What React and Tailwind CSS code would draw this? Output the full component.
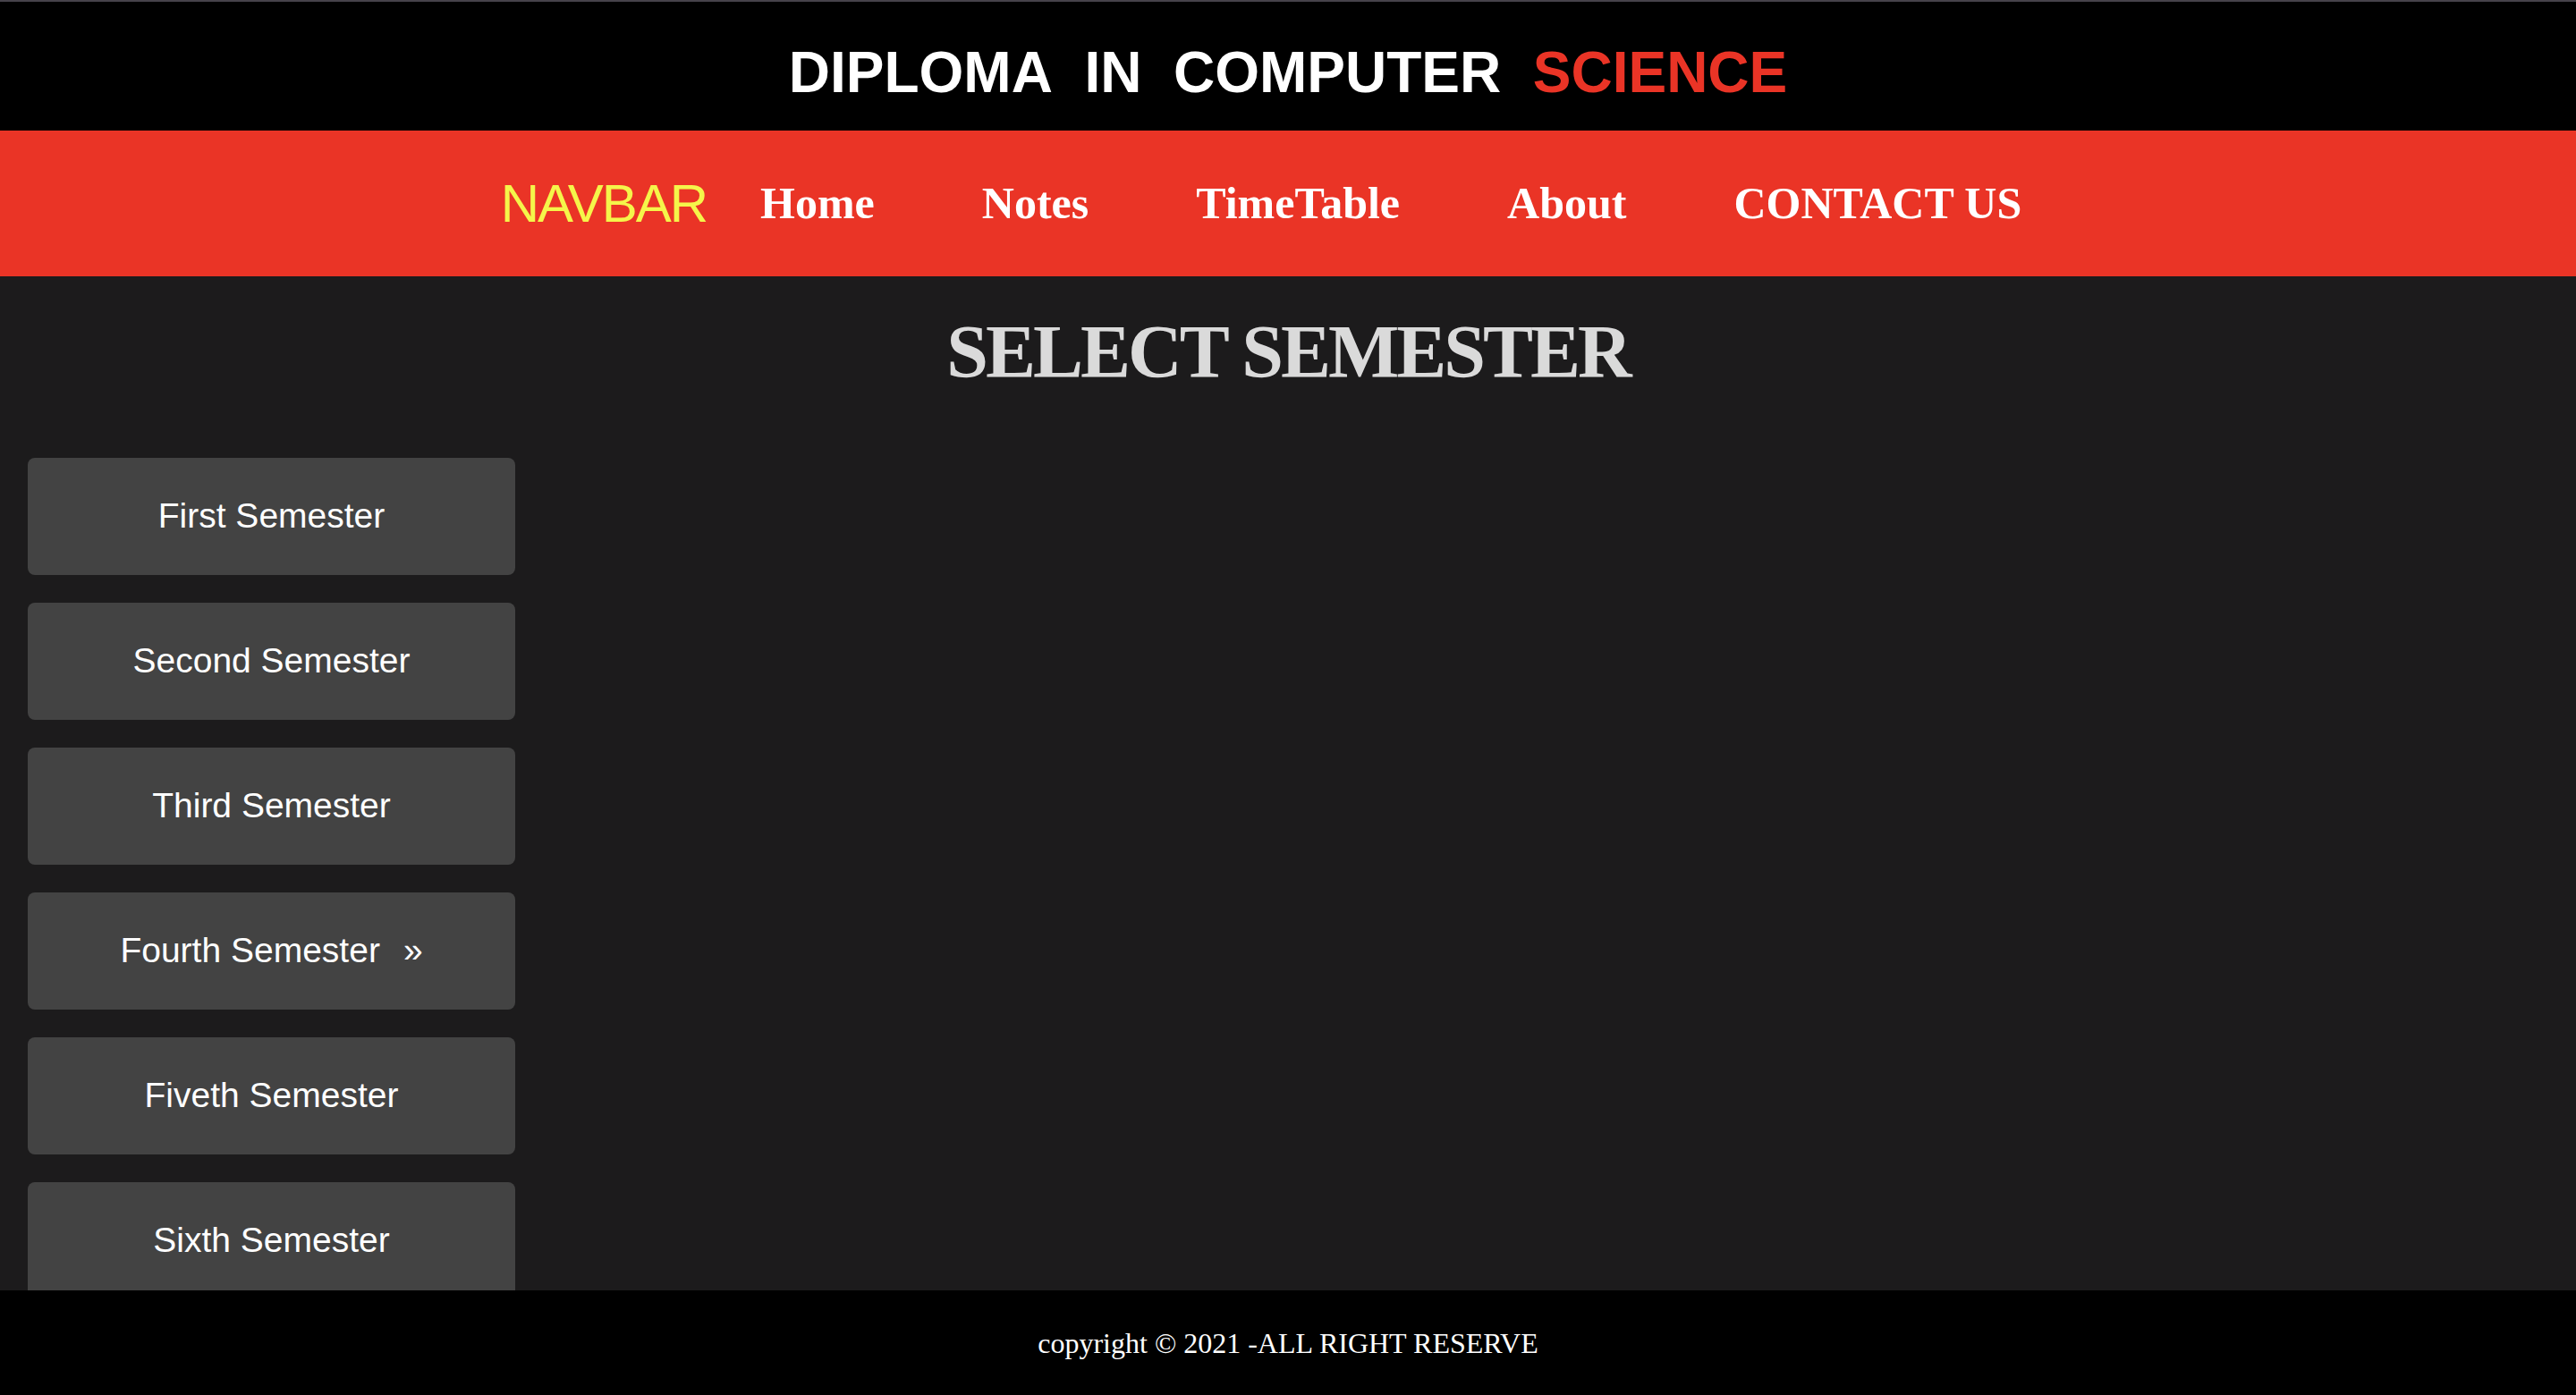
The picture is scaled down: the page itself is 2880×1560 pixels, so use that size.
const links = ['Home', 'Notes', 'TimeTable', 'About', 'CONTACT US']

const semesters = [
  'First Semester',
  'Second Semester',
  'Third Semester',
  'Fourth Semester',
  'Fiveth Semester',
  'Sixth Semester',
]

export default function App() {
  return (
    <div className="min-h-screen bg-[#1c1b1c] pb-[140px]">
      {/* Title bar */}
      <header className="h-[146px] overflow-hidden border-t-2 border-[#46424a] bg-black pt-[31px]">
        <h1 className="text-center font-['Liberation_Sans',Arial,sans-serif] text-[64px] font-bold leading-normal text-white">
          DIPLOMA{'\u00a0 '}IN{'\u00a0 '}COMPUTER{'\u00a0 '}
          <span className="text-[#ea3426]">SCIENCE</span>
        </h1>
      </header>

      {/* Navbar */}
      <nav className="flex h-[163px] items-center justify-center bg-[#ea3426]">
        <span className="font-['Liberation_Sans',Arial,sans-serif] text-[60px] leading-normal tracking-[-2px] text-[#f5f54a]">
          NAVBAR
        </span>
        <ul className="flex items-center">
          {links.map((link) => (
            <li
              key={link}
              className="px-[60px] font-['Liberation_Serif','Times_New_Roman',serif] text-[50px] font-bold leading-normal text-white"
            >
              {link}
            </li>
          ))}
        </ul>
      </nav>

      <h2 className="mt-[22px] text-center font-['Liberation_Serif','Times_New_Roman',serif] text-[84px] font-bold leading-normal tracking-[-3px] text-[#dadada]">
        SELECT SEMESTER
      </h2>

      {/* Semester list */}
      <div className="mt-[55px] flex w-[576px] flex-col gap-[31px] pl-[31px]">
        {semesters.map((sem) => (
          <button
            key={sem}
            className="flex h-[131px] items-center justify-center rounded-[8px] bg-[#434343] font-['Liberation_Sans',Arial,sans-serif] text-[39px] text-white"
          >
            {sem}
            {sem === 'Fourth Semester' && <span className="ml-[26px]">»</span>}
          </button>
        ))}
      </div>

      {/* Footer */}
      <footer className="fixed inset-x-0 bottom-0 flex h-[117px] items-center justify-center bg-black font-['Liberation_Serif','Times_New_Roman',serif] text-[32px] text-white">
        copyright © 2021 -ALL RIGHT RESERVE
      </footer>
    </div>
  )
}
